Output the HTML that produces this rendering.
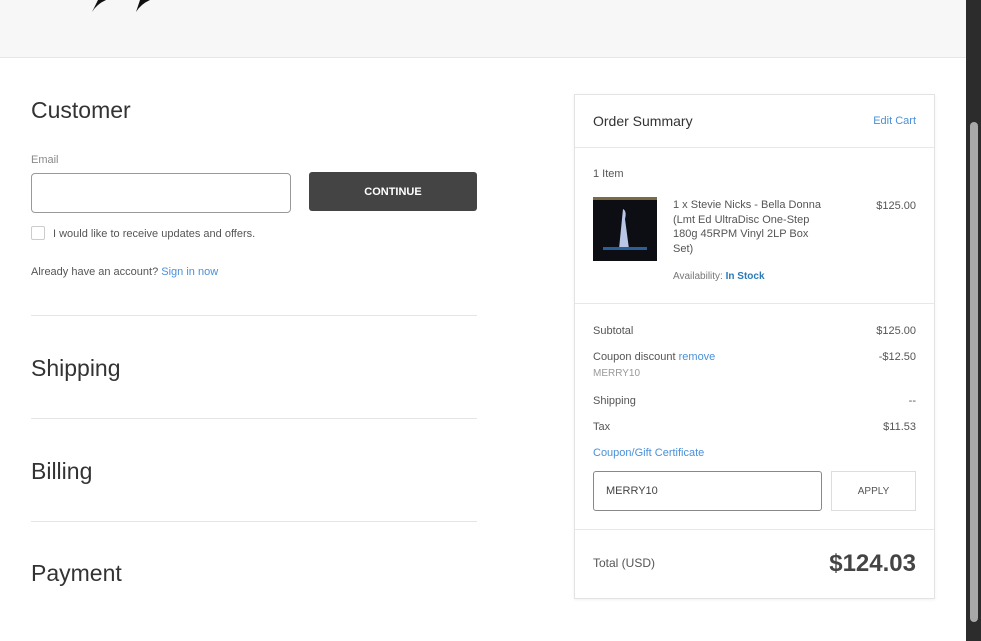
<!DOCTYPE html>
<html><head><style>
*{box-sizing:border-box;margin:0;padding:0}
body{width:981px;height:641px;overflow:hidden;background:#fff;font-family:"Liberation Sans",sans-serif;color:#333;position:relative}
.hdr{position:absolute;left:0;top:0;width:966px;height:58px;background:#f7f7f7;border-bottom:1px solid #e6e6e6}
.sb{position:absolute;left:966px;top:0;width:15px;height:641px;background:#2c2c2c}
.thumb{position:absolute;left:970px;top:122px;width:8px;height:500px;background:#a8a8a8;border-radius:4px}
.a{position:absolute;white-space:nowrap}
h2{font-weight:normal;font-size:23px;color:#333;position:absolute;left:31px}
.hr{position:absolute;left:31px;width:446px;height:1px;background:#e5e5e5}
.s{font-size:11px;color:#555}
.blue{color:#4a90d9}
.card{position:absolute;left:574px;top:94px;width:361px;height:505px;border:1px solid #e3e3e3;box-shadow:0 1px 3px rgba(0,0,0,.06)}
.cl{position:absolute;left:0;width:359px;height:1px;background:#e8e8e8}
</style></head><body>
<div class="hdr">
<svg style="position:absolute;left:88px;top:0" width="70" height="14"><path d="M4 12 L10 0 L18 0 Q9 4 4 12Z M48 12 L52 0 L62 0 Q53 4 48 12Z" fill="#111"/></svg>
</div>
<div class="sb"></div><div class="thumb"></div>
<h2 style="top:97px">Customer</h2>
<div class="a s" style="left:31px;top:154px;color:#888;font-size:11px">Email</div>
<div class="a" style="left:31px;top:173px;width:260px;height:40px;border:1px solid #999;border-radius:4px"></div>
<div class="a" style="left:309px;top:172px;width:168px;height:39px;background:#444;border-radius:3px;color:#fff;font-size:11px;font-weight:bold;text-align:center;line-height:40px">CONTINUE</div>
<div class="a" style="left:31px;top:226px;width:14px;height:14px;border:1px solid #ccc;border-radius:2px"></div>
<div class="a s" style="left:53px;top:228px">I would like to receive updates and offers.</div>
<div class="a s" style="left:31px;top:266px">Already have an account? <span class="blue">Sign in now</span></div>
<div class="hr" style="top:315px"></div>
<h2 style="top:355px">Shipping</h2>
<div class="hr" style="top:418px"></div>
<h2 style="top:458px">Billing</h2>
<div class="hr" style="top:521px"></div>
<h2 style="top:560px">Payment</h2>
<div class="card">
<div class="a" style="left:18px;top:18px;font-size:14px;color:#333">Order Summary</div>
<div class="a blue" style="right:18px;top:20px;font-size:11px">Edit Cart</div>
<div class="cl" style="top:52px"></div>
<div class="a s" style="left:18px;top:73px">1 Item</div>
<svg class="a" style="left:18px;top:102px" width="64" height="64"><rect width="64" height="64" fill="#0d0e14"/><rect x="0" y="0" width="64" height="3" fill="#7a6a45"/><path d="M30 12 q4 2 2 10 l4 30 h-10 l3-30z" fill="#b9c6e6"/><rect x="10" y="50" width="44" height="3" fill="#2a5f9a"/></svg>
<div class="a s" style="left:98px;top:103px;white-space:normal;width:158px;line-height:14.5px">1 x Stevie Nicks - Bella Donna (Lmt Ed UltraDisc One-Step 180g 45RPM Vinyl 2LP Box Set)</div>
<div class="a s" style="right:18px;top:105px">$125.00</div>
<div class="a" style="left:98px;top:176px;font-size:10px;color:#777">Availability: <b style="color:#2a7ab8">In Stock</b></div>
<div class="cl" style="top:208px"></div>
<div class="a s" style="left:18px;top:230px">Subtotal</div><div class="a s" style="right:18px;top:230px">$125.00</div>
<div class="a s" style="left:18px;top:256px">Coupon discount <span class="blue">remove</span></div><div class="a s" style="right:18px;top:256px">-$12.50</div>
<div class="a" style="left:18px;top:273px;font-size:10px;color:#999">MERRY10</div>
<div class="a s" style="left:18px;top:300px">Shipping</div><div class="a s" style="right:18px;top:300px">--</div>
<div class="a s" style="left:18px;top:326px">Tax</div><div class="a s" style="right:18px;top:326px">$11.53</div>
<div class="a blue" style="left:18px;top:352px;font-size:11px">Coupon/Gift Certificate</div>
<div class="a" style="left:18px;top:376px;width:229px;height:40px;border:1px solid #888;border-radius:3px;font-size:11px;padding-left:12px;line-height:39px;color:#444">MERRY10</div>
<div class="a" style="left:256px;top:376px;width:85px;height:40px;border:1px solid #ddd;font-size:10px;text-align:center;line-height:40px;color:#555">APPLY</div>
<div class="cl" style="top:434px"></div>
<div class="a" style="left:18px;top:461px;font-size:12px;color:#555">Total (USD)</div>
<div class="a" style="right:18px;top:455px;font-size:24px;font-weight:bold;color:#444">$124.03</div>
</div>
</body></html>
